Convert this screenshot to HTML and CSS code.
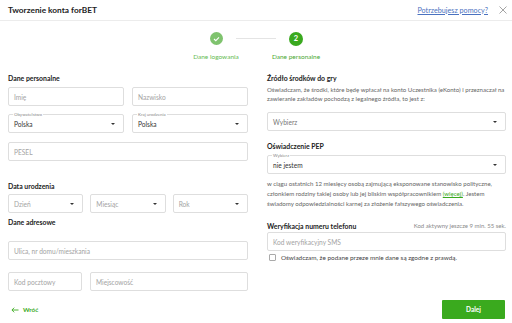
FILE: index.html
```html
<!DOCTYPE html>
<html lang="pl">
<head>
<meta charset="utf-8">
<title>Tworzenie konta forBET</title>
<link rel="stylesheet" href="styles.css">
</head>
<body>
<div class="page">
  <header class="topbar">
    <div class="title">Tworzenie konta forBET</div>
    <div class="top-right">
      <a class="help" href="#">Potrzebujesz pomocy?</a>
      <svg class="close" width="8" height="8" viewBox="0 0 8 8"><path d="M0.5 0.5 L7.5 7.5 M7.5 0.5 L0.5 7.5" stroke="#9a9a9a" stroke-width="0.9" fill="none"/></svg>
    </div>
  </header>

  <div class="stepper">
    <div class="step done">
      <div class="dot"><svg width="7" height="6" viewBox="0 0 7 6"><path d="M1 3 L2.8 4.7 L6 1.3" stroke="#fff" stroke-width="1.1" fill="none"/></svg></div>
      <div class="step-label">Dane logowania</div>
    </div>
    <div class="connector"></div>
    <div class="step active">
      <div class="dot">2</div>
      <div class="step-label">Dane personalne</div>
    </div>
  </div>

  <main class="form">
    <section class="col left">
      <h3 class="sec-title">Dane personalne</h3>
      <div class="row two">
        <div class="input"><span class="ph">Imię</span></div>
        <div class="input"><span class="ph">Nazwisko</span></div>
      </div>
      <div class="row two r2">
        <div class="input select"><span class="float">Obywatelstwo</span><span class="val">Polska</span><i class="caret"></i></div>
        <div class="input select"><span class="float">Kraj urodzenia</span><span class="val">Polska</span><i class="caret"></i></div>
      </div>
      <div class="row r3">
        <div class="input"><span class="ph">PESEL</span></div>
      </div>

      <h3 class="sec-title t-birth">Data urodzenia</h3>
      <div class="row three">
        <div class="input select"><span class="ph">Dzień</span><i class="caret"></i></div>
        <div class="input select"><span class="ph">Miesiąc</span><i class="caret"></i></div>
        <div class="input select"><span class="ph">Rok</span><i class="caret"></i></div>
      </div>

      <h3 class="sec-title t-addr">Dane adresowe</h3>
      <div class="row">
        <div class="input"><span class="ph">Ulica, nr domu/mieszkania</span></div>
      </div>
      <div class="row city">
        <div class="input"><span class="ph">Kod pocztowy</span></div>
        <div class="input"><span class="ph">Miejscowość</span></div>
      </div>
    </section>

    <section class="col right">
      <h3 class="sec-title">Źródło środków do gry</h3>
      <p class="txt p1">Oświadczam, że środki, które będę wpłacał na konto Uczestnika (eKonto) i przeznaczał na zawieranie zakładów pochodzą z legalnego źródła, to jest z:</p>
      <div class="row">
        <div class="input select"><span class="ph dark">Wybierz</span><i class="caret"></i></div>
      </div>
      <h3 class="sec-title t-pep">Oświadczenie PEP</h3>
      <div class="row">
        <div class="input select"><span class="float">Wybierz</span><span class="val">nie jestem</span><i class="caret"></i></div>
      </div>
      <p class="txt p2">w ciągu ostatnich 12 miesięcy osobą zajmującą eksponowane stanowisko polityczne, członkiem rodziny takiej osoby lub jej bliskim współpracownikiem <a href="#" class="more">(więcej)</a>. Jestem świadomy odpowiedzialności karnej za złożenie fałszywego oświadczenia.</p>
      <div class="verify-head">
        <h3 class="sec-title">Weryfikacja numeru telefonu</h3>
        <span class="timer">Kod aktywny jeszcze 9 min. 55 sek.</span>
      </div>
      <div class="row sms">
        <div class="input"><span class="ph">Kod weryfikacyjny SMS</span></div>
      </div>
      <label class="check"><span class="box"></span><span>Oświadczam, że podane przeze mnie dane są zgodne z prawdą.</span></label>
    </section>
  </main>

  <footer class="footer">
    <a class="back" href="#"><svg width="8" height="6" viewBox="0 0 8 6"><path d="M7.5 3 H1 M3.2 0.7 L0.9 3 L3.2 5.3" stroke="#3aaa1e" stroke-width="0.9" fill="none"/></svg><span>Wróć</span></a>
    <button class="next">Dalej</button>
  </footer>
</div>
</body>
</html>
```

FILE: styles.css
```css
* { box-sizing: border-box; margin: 0; padding: 0; }
html, body { background: #fff; }
body {
  font-family: Lato, "Noto Sans", "Liberation Sans", sans-serif;
  color: #2b2b2b;
  width: 512px;
  height: 323px;
  overflow: hidden;
}
.page { width: 512px; }

.topbar {
  height: 21px;
  border-bottom: 1px solid #ececec;
  display: flex;
  align-items: center;
  justify-content: space-between;
  padding: 0 5px 0 8px;
}
.title { font-size: 8.3px; font-weight: 700; color: #222; }
.top-right { display: flex; align-items: center; gap: 11px; }
.help { font-size: 7.2px; color: #4a72c0; text-decoration: underline; }
.close { display: block; }

.stepper {
  height: 44px;
  display: flex;
  justify-content: center;
  align-items: flex-start;
  padding-top: 11px;
}
.step { width: 60px; display: flex; flex-direction: column; align-items: center; }
.dot {
  width: 13px; height: 13px; border-radius: 50%;
  display: flex; align-items: center; justify-content: center;
  color: #fff; font-size: 7.5px; font-weight: 700;
}
.done .dot { background: #7fc36e; }
.active .dot { background: #3aa91f; width: 14px; height: 14px; margin-top: -0.5px; }
.step-label { margin-top: 8px; font-size: 6.5px; color: #66bb52; white-space: nowrap; }
.active .step-label { margin-top: 7.5px; color: #4aa834; }
.connector { height: 1px; background: #e4e4e4; width: 40px; margin: 6px -10px 0; }

.form {
  display: grid;
  grid-template-columns: 240px 240px;
  column-gap: 18px;
  padding: 9px 6px 0 8px;
}
.col { display: flex; flex-direction: column; }
.sec-title { font-size: 6.9px; font-weight: 700; color: #222; line-height: 8px; height: 8px; white-space: nowrap; }

.row { display: flex; gap: 8px; margin-top: 5px; }
.row.r2 { margin-top: 8px; }
.row.r3 { margin-top: 9px; }
.row.two .input { flex: 1; }
.row.three { gap: 7px; margin-top: 4px; }
.row.three .input { flex: 1; }
.row.city { margin-top: 12px; }
.row.city .input:first-child { width: 74px; flex: none; }
.row.city .input:last-child { flex: 1; }

.t-birth { margin-top: 21px; }
.t-addr { margin-top: 5px; }
.t-addr + .row { margin-top: 15px; }

.input {
  position: relative;
  flex: 1;
  height: 19px;
  border: 1px solid #dedede;
  border-radius: 2px;
  display: flex;
  align-items: center;
  padding: 0 5px;
  font-size: 6.6px;
}
.ph { color: #a3a3a3; }
.ph.dark { color: #777; }
.val { color: #333; font-size: 6.6px; padding-top: 1px; }
.float {
  position: absolute;
  left: 4px;
  top: -3px;
  font-size: 4.4px;
  line-height: 5px;
  color: #8a8a8a;
  background: #fff;
  padding: 0 1px;
}
.caret {
  position: absolute;
  right: 8px;
  top: 8px;
  width: 0; height: 0;
  border-left: 2px solid transparent;
  border-right: 2px solid transparent;
  border-top: 2px solid #333;
}

.right { padding-left: 1px; }
.txt { font-size: 6.1px; color: #666; }
.p1 { line-height: 9px; margin-top: 3px; }
.p1 + .row { margin-top: 9px; }
.t-pep { margin-top: 11px; }
.t-pep + .row { margin-top: 5px; }
.p2 { line-height: 10px; margin-top: 5px; }
.more { color: #3aaa1e; text-decoration: underline; }
.verify-head {
  display: flex;
  justify-content: space-between;
  align-items: center;
  height: 8px;
  margin-top: 13px;
}
.timer { font-size: 6px; line-height: 8px; color: #8a8a8a; }
.row.sms { margin-top: 2px; }
.check {
  display: flex;
  align-items: center;
  gap: 5px;
  margin-top: 3px;
  padding-left: 2px;
  font-size: 6.4px;
  color: #444;
}
.box { width: 7px; height: 7px; border: 1px solid #aaa; border-radius: 1px; }

.footer {
  display: flex;
  justify-content: space-between;
  align-items: center;
  padding: 0 7px 0 11px;
  margin-top: 9px;
}
.back {
  display: flex; align-items: center; gap: 4px;
  color: #3aaa1e; font-size: 6.3px; font-weight: 700; text-decoration: none;
}
.back svg { display: block; }
.next {
  width: 63px; height: 19px;
  background: #3aaa1e;
  border: none;
  border-radius: 1px;
  color: #fff;
  font-family: Lato, "Noto Sans", sans-serif;
  font-size: 6.5px;
  font-weight: 700;
}
```
